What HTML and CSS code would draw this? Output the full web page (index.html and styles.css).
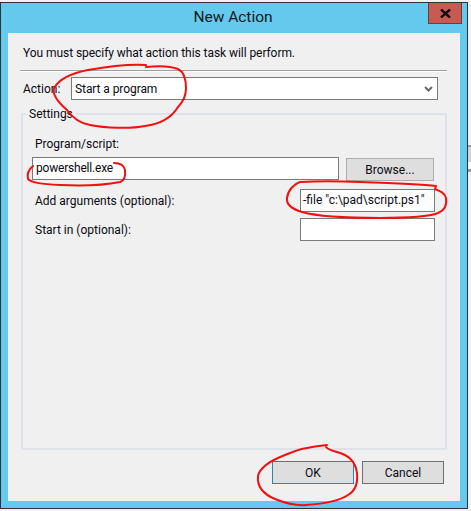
FILE: index.html
```html
<!DOCTYPE html>
<html lang="en">
<head>
<meta charset="utf-8">
<title>New Action</title>
<link rel="stylesheet" href="styles.css">
</head>
<body>
<div class="window">
  <header class="titlebar">
    <h1 class="title">New Action</h1>
    <button class="close" type="button" aria-label="Close"><svg width="11" height="9" viewBox="0 0 11 9"><path d="M1 0.5 L10 8.5 M10 0.5 L1 8.5" stroke="#0c0c0c" stroke-width="2.4" fill="none"/></svg></button>
  </header>
  <main class="content">
    <p class="intro">You must specify what action this task will perform.</p>
    <div class="rule"></div>
    <div class="action-row">
      <span class="label">Action:</span>
      <div class="combo">
        <span class="combo-value">Start a program</span>
        <svg width="9" height="6" viewBox="0 0 9 6"><path d="M1 1 L4.5 4.5 L8 1" stroke="#6a6a6a" stroke-width="2" fill="none"/></svg>
      </div>
    </div>
    <fieldset class="group">
      <legend class="legend">Settings</legend>
      <div class="field-label">Program/script:</div>
      <div class="program-row">
        <div class="input input-program">powershell.exe</div>
        <button class="btn btn-browse" type="button">Browse...</button>
      </div>
      <div class="opt-row opt-args">
        <span class="opt-label">Add arguments (optional):</span>
        <div class="input input-opt">-file "c:\pad\script.ps1"</div>
      </div>
      <div class="opt-row opt-start">
        <span class="opt-label">Start in (optional):</span>
        <div class="input input-opt"></div>
      </div>
    </fieldset>
    <footer class="buttons">
      <button class="btn btn-ok" type="button">OK</button>
      <button class="btn btn-cancel" type="button">Cancel</button>
    </footer>
  </main>
  <svg class="ink" width="471" height="511" viewBox="0 0 471 511" aria-hidden="true">
    <path d="M146 65 C130 64 105 67 88 70 C72 73 60 78 54 88 C52 95 60 104 67 110 C72 117 78 123 90 125 C105 128 130 129 145 126 C160 124 172 117 178 107 C183 102 186 95 186 88 C186 78 184 72 178 69 C168 65 155 66 146 67"/>
    <path d="M33 166 C28 170 27 175 28 179 C32 183 42 184 60 185 C80 186 105 185 120 182 C124 181 126 176 125 170 C124 165 120 163 114 163"/>
    <path d="M300 182 C294 184 288 190 287 198 C286 205 292 209 302 212 C320 217 350 218 380 218 C405 218 428 217 438 213 C445 210 447 204 446 198 C445 193 440 191 435 189 L436 186 C420 184 390 183 360 182 C340 181 315 181 300 182"/>
    <path d="M327 445 C315 446 298 449 285 455 C272 460 260 467 258 476 C257 486 263 494 275 499 C285 503 295 506 306 505 C320 504 338 502 348 495 C355 491 358 483 357 473 C356 465 353 459 345 455 C337 451 329 451 326 447"/>
  </svg>
</div>
<div class="edge">
  <div class="edge-thumb"></div>
  <div class="edge-gap"></div>
  <div class="edge-end"></div>
</div>
</body>
</html>
```
FILE: styles.css
```css
* { box-sizing: border-box; }
html, body { margin: 0; padding: 0; }
body {
  width: 471px;
  height: 511px;
  overflow: hidden;
  display: flex;
  align-items: flex-start;
  background: #f1f1f1;
  font-family: Roboto, "Noto Sans", sans-serif;
  font-size: 12px;
  color: #0a0a14;
}
.window {
  position: relative;
  width: 468px;
  height: 507px;
  margin-top: 2px;
  display: flex;
  flex-direction: column;
  padding: 0 7px 7px 7px;
  background: #64c9ec;
  border: 1px solid #2f3336;
}
.titlebar {
  flex: none;
  height: 30px;
  display: flex;
  align-items: center;
  justify-content: center;
}
.title {
  margin: 0 0 2px -2px;
  font-size: 15.5px;
  font-weight: 400;
  color: #101a20;
}
.close {
  position: absolute;
  top: 0;
  right: 5px;
  width: 34px;
  height: 21px;
  padding: 0;
  display: flex;
  align-items: center;
  justify-content: center;
  background: #c75b52;
  border: 1px solid #6f3b38;
  border-top: 0;
}
.content {
  flex: 1;
  display: flex;
  flex-direction: column;
  padding: 12px 13px 17px 12px;
  background: #f0f0f0;
}
.intro {
  margin: 0;
  padding-left: 3px;
  height: 16px;
  line-height: 16px;
  letter-spacing: -0.06px;
}
.rule {
  margin-top: 9px;
  height: 2px;
  border-top: 1px solid #a0a0a0;
  border-bottom: 1px solid #fff;
}
.action-row {
  margin-top: 5px;
  display: flex;
  align-items: center;
  padding-left: 3px;
  padding-right: 9px;
}
.label { width: 48px; }
.combo {
  flex: 1;
  height: 23px;
  padding: 0 4px 0 3px;
  display: flex;
  align-items: center;
  justify-content: space-between;
  background: #fff;
  border: 1px solid #7a7a7a;
}
.combo-value { letter-spacing: -0.08px; }
.group {
  margin: 6px 0 0 1px;
  padding: 14px 10px 0 9px;
  height: 344px;
  background: transparent;
  border: 2px solid #dfe3e9;
  border-radius: 2px;
  min-width: 0;
}
.legend {
  margin-left: -6px;
  padding: 0 3px;
  height: 16px;
  line-height: 16px;
}
.field-label {
  height: 16px;
  line-height: 16px;
  padding-left: 3px;
}
.input {
  height: 23px;
  line-height: 21px;
  padding: 0 3px;
  background: #fff;
  border: 1px solid #7a7a7a;
  white-space: nowrap;
}
.input-program { letter-spacing: -0.2px; }
.program-row {
  margin-top: 5px;
  display: flex;
  align-items: flex-start;
  gap: 7px;
}
.input-program { width: 307px; }
.btn {
  height: 23px;
  padding: 0;
  font: inherit;
  color: inherit;
  background: #dedede;
  border: 1px solid #adadad;
}
.btn-browse {
  width: 88px;
  margin-top: 1px;
}
.opt-row {
  display: flex;
  align-items: center;
  justify-content: space-between;
  padding-left: 3px;
}
.opt-args { margin-top: 8px; }
.opt-start { margin-top: 6px; }
.input-opt { width: 135px; padding-left: 2px; }
.buttons {
  margin-top: auto;
  display: flex;
  justify-content: flex-end;
  gap: 8px;
  padding-right: 3px;
}
.btn-ok, .btn-cancel { width: 82px; }
.btn-ok { border-color: #3a7cae; }
.btn-cancel { border-color: #707070; }
.ink {
  position: absolute;
  left: -1px;
  top: -3px;
  pointer-events: none;
  fill: none;
  stroke: #f01010;
  stroke-width: 2;
  stroke-linecap: round;
  stroke-linejoin: round;
}
.edge {
  flex: none;
  width: 3px;
  margin-top: 145px;
  display: flex;
  flex-direction: column;
}
.edge-thumb {
  height: 17px;
  background: #d4d4d4;
  border-top: 2px solid #9a9a9a;
}
.edge-gap { height: 7px; background: #fff; }
.edge-end { height: 3px; background: #9a9a9a; }
```
